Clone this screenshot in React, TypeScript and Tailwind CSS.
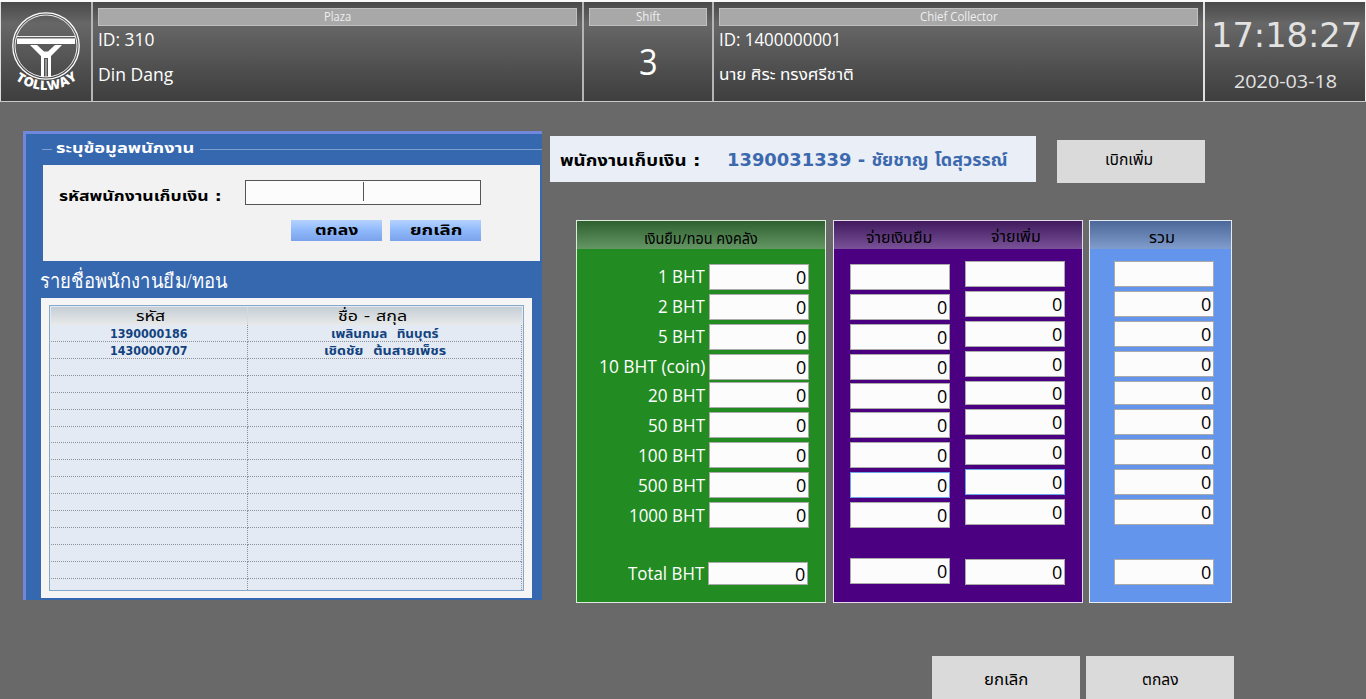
import { useLayoutEffect, useRef, type ReactNode } from "react";

const ui = "font-['Open_Sans','Noto_Sans_Thai',sans-serif]";
const wide = "font-['DejaVu_Sans','Noto_Sans_Thai',sans-serif]";

/* One line of text, stretched or squeezed to the width of its box. */
function Fit({ className, children }: { className: string; children: ReactNode }) {
  const ref = useRef<HTMLSpanElement>(null);
  useLayoutEffect(() => {
    const el = ref.current;
    if (!el || !el.parentElement) return;
    const apply = () => {
      el.style.transform = `scaleX(${el.parentElement!.clientWidth / el.offsetWidth})`;
    };
    apply();
    document.fonts?.ready.then(apply);
  }, []);
  return (
    <div className={`shrink-0 whitespace-nowrap ${className}`}>
      <span ref={ref} className="inline-block origin-left">
        {children}
      </span>
    </div>
  );
}

function Logo() {
  return (
    <svg viewBox="1 0 91 98" className="h-[98px] w-[91px]" fill="none" stroke="#fff">
      <circle cx="46" cy="44" r="33.2" strokeWidth="1.3" />
      <circle cx="46" cy="44" r="31" strokeWidth="0.9" />
      <path d="M17 34.5H75" strokeWidth="0.9" />
      <path d="M17 36.5H75V42H17Z" fill="#fff" stroke="none" />
      <path d="M30 43H37L44 49.5H48L55 43H62L51 54V75H48V56H44V75H41V54Z" fill="#fff" stroke="none" />
      <path d="M46 57V75M44 52.5H48" strokeWidth="0.8" />
      <path id="logo-arc" d="M14.5 77Q46 99 77.5 77" stroke="none" />
      <text fill="#fff" stroke="none" className="font-['Open_Sans'] text-[13px] font-extrabold">
        <textPath href="#logo-arc" startOffset="1" textLength="67">
          TOLLWAY
        </textPath>
      </text>
    </svg>
  );
}

const headBg = "bg-linear-to-b from-[#494949] via-[#676767] via-[22%] to-[#3e3e3e]";
const barCls =
  "flex h-[18px] items-center justify-center border border-[#c0c0c0] bg-[#a8a8a8] text-[#eee]";

function Header() {
  return (
    <header className={`flex h-[102px] border-t-2 border-b border-t-[#fafafa] border-b-[#c8c8c8] ${headBg} text-white ${ui}`}>
      <div className="w-[93px] border-r-2 border-l border-r-[#b5b5b5] border-l-[#ddd]">
        <Logo />
      </div>
      <div className="w-[491px] border-r-2 border-[#b5b5b5] px-[5px] pt-[6px]">
        <div className={barCls}>
          <Fit className="w-[27px] text-[12px] leading-4">Plaza</Fit>
        </div>
        <Fit className="w-[56px] text-[18px] leading-[26px]">ID: 310</Fit>
        <Fit className="mt-[9px] w-[75px] text-[18px] leading-[26px]">Din Dang</Fit>
      </div>
      <div className="flex w-[130px] flex-col items-center border-r-2 border-[#b5b5b5] px-[5px] pt-[6px]">
        <div className={`${barCls} w-full`}>
          <Fit className="w-[24px] text-[12px] leading-4">Shift</Fit>
        </div>
        <Fit className="mt-[11px] w-[19px] text-[36px] leading-[50px]">3</Fit>
      </div>
      <div className="w-[491px] border-r-2 border-[#e0e0e0] px-[5px] pt-[6px]">
        <div className={barCls}>
          <Fit className="w-[78px] text-[12px] leading-4">Chief Collector</Fit>
        </div>
        <Fit className="w-[122px] text-[18px] leading-[26px]">ID: 1400000001</Fit>
        <Fit className="mt-[9px] w-[135px] text-[16px] leading-[26px]">นาย ศิระ ทรงศรีชาติ</Fit>
      </div>
      <div className="flex w-[161px] flex-col items-center border-r border-[#eee] text-[#e2e2e2]">
        <Fit className={`mt-[9px] ml-[2px] w-[151px] text-[33px] leading-[50px] ${wide}`}>17:18:27</Fit>
        <Fit className="mt-[5px] w-[103px] text-[19px] leading-[30px]">2020-03-18</Fit>
      </div>
    </header>
  );
}

const staff = [
  { id: "1390000186", name: "เพลินกมล  ทินบุตร์", w: "w-[108px]" },
  { id: "1430000707", name: "เชิดชัย  ต้นสายเพ็ชร", w: "w-[122px]" },
];
const rows = Array.from({ length: 16 }, (_, i) => staff[i]);

function StaffPanel() {
  const blueBtn =
    "flex h-[21px] w-[91px] justify-center bg-linear-to-b from-[#b5d2ff] via-[#8fb9fb] to-[#7ba2ea]";
  return (
    <section className={`h-[469px] w-[519px] shrink-0 border-t-3 border-l-3 border-[#6f88dc] bg-[#3668b0] ${wide}`}>
      <div className="flex h-[31px] items-center pl-4">
        <div className="h-px w-[10px] bg-[#7f9fd0]" />
        <Fit className="ml-[4px] h-[30px] w-[138px] text-[14px] leading-[27px] font-bold text-white">ระบุข้อมูลพนักงาน</Fit>
        <div className="ml-[6px] h-px flex-1 bg-[#7f9fd0]" />
      </div>
      <div className="ml-[17px] h-[96px] w-[497px] bg-[#f2f2f3] pt-[15px]">
        <div className="flex h-[25px]">
          <Fit className="ml-[16px] w-[163px] text-[14px] leading-[33px] font-bold text-black">รหัสพนักงานเก็บเงิน :</Fit>
          <div className="ml-[23px] flex h-[25px] w-[236px] justify-center border border-[#555] bg-[#fcfcfc] pt-px">
            <div className="h-[19px] w-px bg-[#555]" />
          </div>
        </div>
        <div className="mt-[15px] ml-[248px] flex gap-2">
          <div className={blueBtn}>
            <Fit className="w-[43px] text-[14px] leading-[21px] font-bold">ตกลง</Fit>
          </div>
          <div className={blueBtn}>
            <Fit className="w-[52px] text-[14px] leading-[21px] font-bold">ยกเลิก</Fit>
          </div>
        </div>
      </div>
      <div className="flex h-[37px] pl-[14px]">
        <Fit className="w-[188px] font-['Liberation_Serif',serif] text-[20px] leading-[40px] font-medium text-white">
          รายชื่อพนักงานยืม/ทอน
        </Fit>
      </div>
      <div className="ml-[15px] h-[300px] w-[491px] bg-[#f5f5f5] px-2 py-[7px]">
        <div className="flex h-[286px] w-[475px] flex-col overflow-hidden border border-[#86a9c8] bg-[#e3eaf3] p-px">
          <div className="flex h-[18px] shrink-0 bg-linear-to-b from-[#c5ced6] to-[#e8e9e9]">
            <div className="flex w-[197px] justify-center border-r border-[#d5dade]">
              <Fit className="ml-[2px] w-[29px] text-[14px] leading-[19px] text-black">รหัส</Fit>
            </div>
            <div className="flex flex-1 justify-center pr-[25px]">
              <Fit className="w-[69px] text-[14px] leading-[19px] text-black">ชื่อ - สกุล</Fit>
            </div>
          </div>
          {rows.map((row, i) => (
            <div key={i} className="flex h-[16.93px] shrink-0 border-r border-dotted border-r-[#999] text-[#12427f]">
              <div className="flex w-[197px] justify-center border-r border-b border-dotted border-[#8e9297]">
                {row && <Fit className="h-4 w-[78px] text-[12px] leading-[19px] font-bold">{row.id}</Fit>}
              </div>
              <div className="flex flex-1 justify-center border-b border-dotted border-[#8e9297]">
                {row && <Fit className={`h-4 text-[12px] leading-[19px] font-bold whitespace-pre ${row.w}`}>{row.name}</Fit>}
              </div>
            </div>
          ))}
        </div>
      </div>
    </section>
  );
}

type BoxProps = { value?: string; border?: string; height?: string };

function Box({ value = "0", border = "border-[#aaa]", height = "h-[26px]" }: BoxProps) {
  return (
    <div className={`flex w-[100px] shrink-0 items-center justify-end border bg-[#fcfcfc] pr-[2px] text-black ${border} ${height}`}>
      {value && <Fit className="h-6 w-[10px] text-[18px] leading-[24px]">{value}</Fit>}
    </div>
  );
}

const labels = [
  { text: "1 BHT", w: "w-[47px]", lead: "leading-[24px]" },
  { text: "2 BHT", w: "w-[47px]", lead: "leading-[24px]" },
  { text: "5 BHT", w: "w-[47px]", lead: "leading-[24px]" },
  { text: "10 BHT (coin)", w: "w-[106px]", lead: "leading-[24px]" },
  { text: "20 BHT", w: "w-[57px]", lead: "leading-[27px]" },
  { text: "50 BHT", w: "w-[57px]", lead: "leading-[26px]" },
  { text: "100 BHT", w: "w-[67px]", lead: "leading-[26px]" },
  { text: "500 BHT", w: "w-[67px]", lead: "leading-[26px]" },
  { text: "1000 BHT", w: "w-[76px]", lead: "leading-[26px]" },
];

type ColumnProps = { gap5: string; gap6: string; height5: string; total: string; highlight?: boolean };

/* Nine denomination boxes and, below them, the total. */
function BoxColumn({ gap5, gap6, height5, total, highlight }: ColumnProps) {
  return (
    <div className="flex flex-col">
      {labels.map((l, i) => (
        <div key={l.text} className={i === 0 ? "" : i === 4 ? gap5 : i === 5 ? gap6 : "mt-[4px]"}>
          <Box
            value={i === 0 ? "" : "0"}
            height={i === 4 ? height5 : "h-[26px]"}
            border={highlight && i === 7 ? "border-[#6aa3e8]" : "border-[#aaa]"}
          />
        </div>
      ))}
      <div className={total}>
        <Box />
      </div>
    </div>
  );
}

function MoneyTables() {
  return (
    <div className={`flex h-[383px] text-white ${ui}`}>
      <section className="h-[383px] w-[250px] border border-[#dfeadf] bg-[#228b22]">
        <div className="flex h-7 justify-center bg-linear-to-b from-[#2f602f] to-[#659765]">
          <Fit className="w-[114px] pr-px text-[15px] leading-[35px] text-black">เงินยืม/ทอน คงคลัง</Fit>
        </div>
        <div className="flex flex-col items-end pt-[15px] pr-4">
          {labels.map((l, i) => (
            <div key={l.text} className={`flex h-[26px] gap-[4px] ${i === 0 ? "" : i === 4 ? "mt-[2px]" : "mt-[4px]"}`}>
              <Fit className={`text-[18px] ${l.lead} ${l.w}`}>{l.text}</Fit>
              <Box />
            </div>
          ))}
          <div className="mt-[32px] mr-px flex h-[26px] gap-[4px]">
            <Fit className="w-[76px] text-[18px] leading-[26px]">Total BHT</Fit>
            <div className="pt-[2px]">
              <Box height="h-[23px]" />
            </div>
          </div>
        </div>
      </section>
      <section className="ml-[7px] h-[383px] w-[250px] border border-[#e4dcec] bg-[#4b0082]">
        <div className="flex h-7 bg-linear-to-b from-[#401a5d] to-[#7a5299]">
          <Fit className="ml-[32px] w-[66px] text-[15px] leading-[32px] text-black">จ่ายเงินยืม</Fit>
          <Fit className="ml-[59px] w-[50px] text-[15px] leading-[30px] text-black">จ่ายเพิ่ม</Fit>
        </div>
        <div className="flex gap-[15px] pl-4">
          <div className="pt-[15px]">
            <BoxColumn gap5="mt-[3px]" gap6="mt-[3px]" height5="h-[26px]" total="mt-[30px]" highlight />
          </div>
          <div className="pt-[12px]">
            <BoxColumn gap5="mt-[4px]" gap6="mt-[4px]" height5="h-[24px]" total="mt-[34px]" highlight />
          </div>
        </div>
      </section>
      <section className="ml-[6px] h-[383px] w-[143px] border border-[#e5eaf5] bg-[#6495ed]">
        <div className="flex h-7 justify-center bg-linear-to-b from-[#4c6899] to-[#819dcd]">
          <Fit className="ml-[3px] w-[26px] text-[15px] leading-[33px] text-black">รวม</Fit>
        </div>
        <div className="pt-[12px] pl-[24px]">
          <BoxColumn gap5="mt-[4px]" gap6="mt-[4px]" height5="h-[24px]" total="mt-[34px]" />
        </div>
      </section>
    </div>
  );
}

const grayBtn = "flex w-[148px] shrink-0 justify-center bg-[#dadada] text-black";

export default function App() {
  return (
    <div className="flex h-[699px] w-[1366px] flex-col overflow-hidden bg-[#696969]">
      <Header />
      <main className="flex h-[554px] pt-[29px] pl-[23px]">
        <StaffPanel />
        <div className="ml-2 pt-[5px]">
          <div className="flex">
            <div className={`flex h-[46px] w-[486px] bg-[#e9eef7] ${wide}`}>
              <Fit className="ml-[10px] w-[140px] text-[16px] leading-[50px] font-bold text-black">พนักงานเก็บเงิน :</Fit>
              <Fit className="ml-[27px] w-[280px] text-[17px] leading-[48px] font-bold text-[#3c69ae]">
                1390031339 - ชัยชาญ โดสุวรรณ์
              </Fit>
            </div>
            <div className={`ml-[21px] mt-[4px] h-[43px] ${grayBtn}`}>
              <Fit className={`mr-[5px] w-[48px] text-[16px] leading-[38px] ${ui}`}>เบิกเพิ่ม</Fit>
            </div>
          </div>
          <div className="mt-[37px] ml-[26px]">
            <MoneyTables />
          </div>
        </div>
      </main>
      <footer className={`flex h-[43px] gap-[6px] pl-[932px] ${ui}`}>
        <div className={grayBtn}>
          <Fit className="w-[44px] text-[16px] leading-[47px]">ยกเลิก</Fit>
        </div>
        <div className={grayBtn}>
          <Fit className="w-[37px] text-[16px] leading-[47px]">ตกลง</Fit>
        </div>
      </footer>
    </div>
  );
}
